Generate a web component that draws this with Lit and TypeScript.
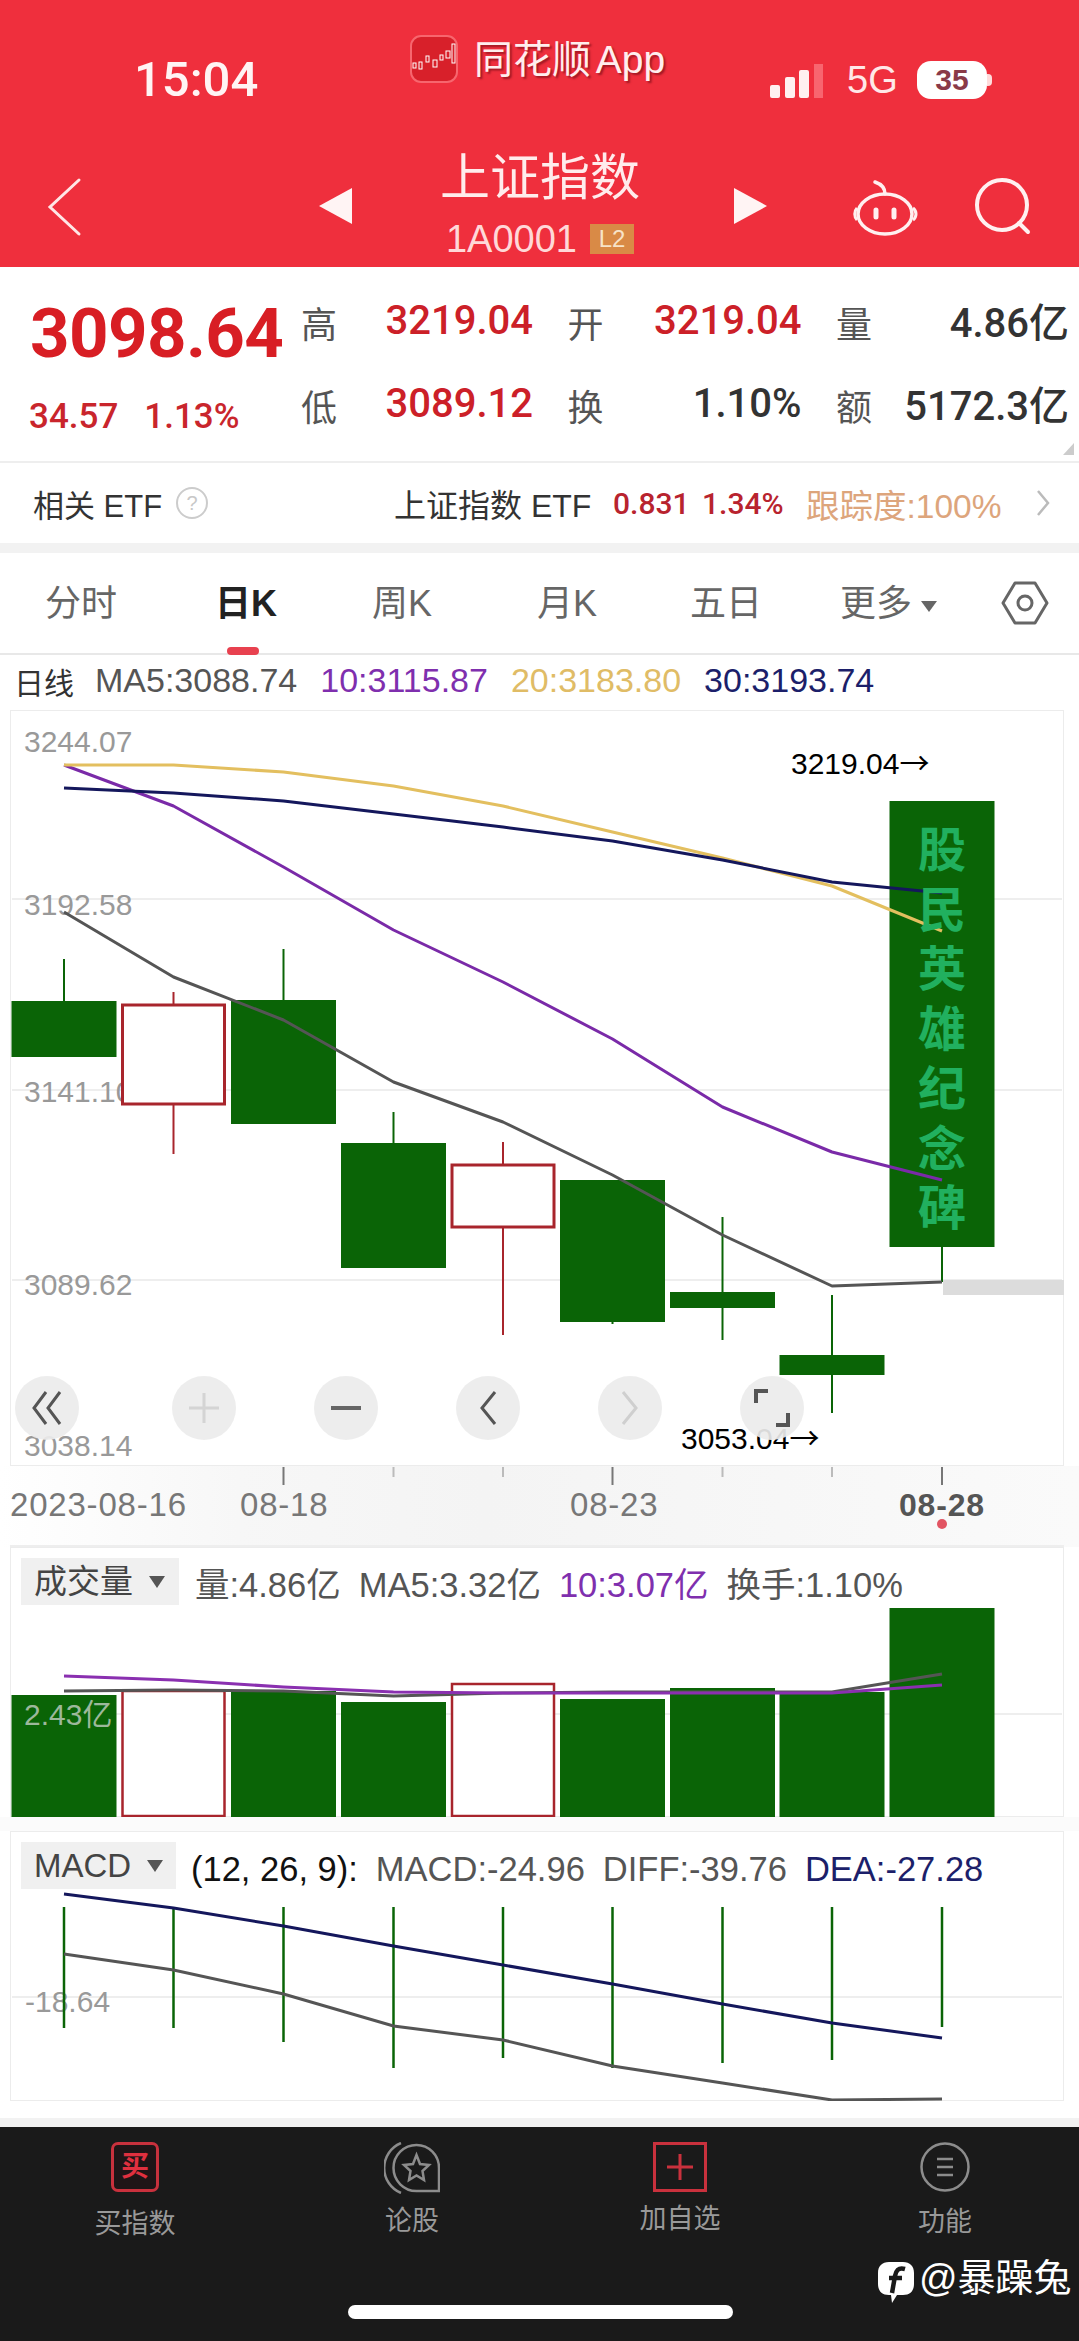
import { LitElement, css, html, svg } from "lit";
import { customElement } from "lit/decorators.js";

type Candle = {
  x: number;
  up: boolean;
  wickTop: number;
  top: number;
  bottom: number;
  wickBottom: number;
};

const X = [64, 173.5, 283.5, 393.5, 503, 612.5, 722.5, 832, 942];

const CANDLES: Candle[] = [
  { x: X[0], up: false, wickTop: 959, top: 1001, bottom: 1057, wickBottom: 1057 },
  { x: X[1], up: true, wickTop: 992, top: 1005, bottom: 1104, wickBottom: 1154 },
  { x: X[2], up: false, wickTop: 949, top: 1000, bottom: 1124, wickBottom: 1124 },
  { x: X[3], up: false, wickTop: 1112, top: 1143, bottom: 1268, wickBottom: 1268 },
  { x: X[4], up: true, wickTop: 1142, top: 1165, bottom: 1227, wickBottom: 1335 },
  { x: X[5], up: false, wickTop: 1180, top: 1180, bottom: 1322, wickBottom: 1324 },
  { x: X[6], up: false, wickTop: 1217, top: 1292, bottom: 1308, wickBottom: 1340 },
  { x: X[7], up: false, wickTop: 1295, top: 1355, bottom: 1375, wickBottom: 1413 },
  { x: X[8], up: false, wickTop: 801, top: 801, bottom: 1247, wickBottom: 1282 },
];

const MA5 = [912, 977, 1020, 1082, 1122, 1175, 1235, 1286, 1282];
const MA10 = [765, 806, 867, 930, 982, 1039, 1107, 1152, 1180];
const MA20 = [765, 765, 772, 786, 806, 832, 858, 886, 931];
const MA30 = [788, 793, 801, 814, 827, 841, 860, 882, 893];

const VOLUMES = [1695, 1691, 1691, 1702, 1684, 1699, 1688, 1692, 1608];
const VOL_A = [1676, 1680, 1687, 1692, 1693, 1693, 1693, 1693, 1685];
const VOL_B = [1691, 1690, 1691, 1696, 1693, 1692, 1692, 1692, 1674];

const MACD_BOTTOM = [2028, 2028, 2042, 2068, 2058, 2068, 2063, 2060, 2027];
const DEA = [1894, 1908, 1926, 1946, 1965, 1984, 2004, 2023, 2038];
const DIFF = [1954, 1970, 1994, 2026, 2040, 2066, 2083, 2100, 2099];

const LOGO_CANDLES = [
  [3, 28, 3, 5],
  [9, 27, 3, 7],
  [16, 21, 3, 6],
  [23, 25, 4, 7],
  [30, 20, 3, 5],
  [36, 16, 4, 7],
  [42, 9, 3, 19],
];

const TICKS = [X[2], X[3], X[4], X[5], X[6], X[7], X[8]];

const pts = (ys: number[]) => ys.map((y, i) => `${X[i]},${y}`).join(" ");

@customElement("app-root")
export class AppRoot extends LitElement {
  static styles = css`
    :host {
      display: block;
      width: 1079px;
      height: 2341px;
      overflow: hidden;
      position: relative;
      background: #fff;
      font-family: "Liberation Sans", "Noto Sans CJK SC", sans-serif;
      color: #333;
    }
    svg {
      display: block;
    }
    svg text {
      font-family: "Liberation Sans", "Noto Sans CJK SC", sans-serif;
    }

    /* header */
    .header {
      height: 267px;
      background: #ef2f3d;
      color: #fff;
      overflow: hidden;
    }
    .status {
      height: 148px;
      display: grid;
      grid-template-columns: 410px 360px 1fr;
      align-items: start;
    }
    .time {
      font-family: Roboto, sans-serif;
      font-weight: 500;
      font-size: 49px;
      line-height: 56px;
      padding: 52px 0 0 134px;
      color: #fff4f4;
    }
    .app {
      display: flex;
      align-items: center;
      gap: 16px;
      margin-top: 33px;
      font-size: 39px;
      line-height: 48px;
      word-spacing: -6px;
      color: #ffeeee;
      text-shadow: 2px 2px 2px rgba(110, 10, 20, 0.6);
    }
    .app span {
      margin-top: 3px;
    }
    .sys {
      display: flex;
      align-items: center;
      height: 38px;
      margin-top: 61px;
    }
    .fiveg {
      font-size: 38px;
      line-height: 38px;
      width: 48px;
      margin: 0 22px 0 24px;
      color: #ffe8e8;
      white-space: nowrap;
    }
    .battery {
      width: 70px;
      height: 38px;
      border-radius: 14px;
      background: #fff;
      color: #8a3a48;
      font-size: 30px;
      font-weight: 700;
      line-height: 38px;
      text-align: center;
    }
    .nub {
      width: 5px;
      height: 12px;
      border-radius: 0 4px 4px 0;
      background: #ffdcdc;
    }
    .nav {
      display: grid;
      grid-template-columns: 319px 121px 200px 127px 151px 1fr;
      align-items: start;
    }
    .back {
      margin: 29px 0 0 44px;
    }
    .tri {
      margin-top: 40px;
    }
    .tri.right {
      justify-self: end;
    }
    .robot {
      justify-self: end;
      margin-top: 30px;
      margin-right: -1px;
    }
    .search {
      margin: 28px 0 0 54px;
    }
    .title {
      text-align: center;
    }
    .name {
      font-size: 50px;
      line-height: 60px;
      color: #ffecec;
    }
    .code {
      display: flex;
      justify-content: center;
      align-items: center;
      gap: 13px;
      margin-top: 14px;
      font-size: 38px;
      line-height: 34px;
      color: #ffd8d8;
    }
    .l2 {
      width: 44px;
      height: 30px;
      background: #d98a46;
      color: #f7e3c8;
      font-size: 24px;
      line-height: 30px;
    }

    /* quote */
    .quote {
      height: 194px;
      box-sizing: border-box;
      padding: 30px 12px 0 29px;
      display: grid;
      grid-template-columns: 272px 1fr;
      position: relative;
    }
    .price {
      font-family: Roboto, sans-serif;
      font-weight: 700;
      font-size: 69px;
      line-height: 64px;
      letter-spacing: -0.6px;
      color: #d81e24;
      margin: 5px 0 0 1px;
    }
    .change {
      display: flex;
      gap: 26px;
      margin-top: 31px;
      font-family: Roboto, sans-serif;
      font-weight: 500;
      font-size: 35px;
      line-height: 40px;
      color: #c9252c;
    }
    .stats {
      display: grid;
      grid-template-columns: 230px 232px 231px;
      column-gap: 36.5px;
      row-gap: 33px;
      align-content: start;
    }
    .stat {
      display: flex;
      justify-content: space-between;
      align-items: center;
      height: 50px;
    }
    .stat label {
      font-size: 36px;
      color: #555;
    }
    .stat b {
      font-family: Roboto, "Noto Sans CJK SC", sans-serif;
      font-weight: 500;
      font-size: 40px;
      color: #333;
      white-space: nowrap;
      margin: -4px -2px 0 0;
    }
    .stat b.red {
      color: #cc2028;
    }
    .corner {
      position: absolute;
      right: 5px;
      bottom: 6px;
      width: 0;
      height: 0;
      border-left: 11px solid transparent;
      border-bottom: 12px solid #ccc;
    }

    /* etf */
    .etf {
      height: 82px;
      box-sizing: border-box;
      border-top: 2px solid #eee;
      display: flex;
      align-items: center;
      padding-left: 33px;
      font-size: 32px;
      white-space: nowrap;
    }
    .etf-label {
      width: 129px;
      font-size: 31px;
    }
    .help {
      width: 28px;
      height: 28px;
      margin-left: 14px;
      border: 2px solid #ccc;
      border-radius: 50%;
      color: #c8c8c8;
      font-size: 20px;
      line-height: 28px;
      text-align: center;
    }
    .etf-name {
      margin-left: 186px;
      width: 219px;
    }
    .etf-num {
      font-family: Roboto, sans-serif;
      font-weight: 500;
      font-size: 30px;
      color: #b8232e;
      width: 89px;
    }
    .etf-num.wide {
      width: 104px;
    }
    .track {
      width: 230px;
      font-size: 33.5px;
      color: #dda57c;
    }
    .band {
      height: 10px;
      background: #f2f2f2;
    }

    /* tabs */
    .tabs {
      height: 102px;
      box-sizing: border-box;
      border-bottom: 2px solid #e8e8e8;
      display: grid;
      grid-template-columns: 215px 157px 165px 153px 150px 161px 1fr;
      align-items: center;
      font-size: 36px;
      color: #666;
    }
    .tab {
      position: relative;
      padding-left: 45px;
      height: 100px;
      line-height: 102px;
      white-space: nowrap;
    }
    .tab + .tab {
      padding-left: 0;
    }
    .tab.active {
      color: #222;
      font-weight: 700;
    }
    .tab.active::after {
      content: "";
      position: absolute;
      left: 12px;
      bottom: -2px;
      width: 32px;
      height: 8px;
      border-radius: 4px;
      background: #e8414f;
    }
    .caret {
      display: inline-block;
      margin-left: 9px;
      vertical-align: 4px;
      border-left: 8px solid transparent;
      border-right: 8px solid transparent;
      border-top: 11px solid #666;
    }

    /* legends */
    .legend {
      height: 55px;
      box-sizing: border-box;
      padding: 0 0 4px 14px;
      display: flex;
      align-items: center;
      font-size: 34px;
      white-space: nowrap;
      color: #555;
    }
    .legend .line {
      font-size: 30px;
      color: #333;
      margin-right: 21px;
    }
    .legend span + span {
      margin-right: 23px;
    }
    .purple {
      color: #7f2fae;
    }
    .yellow {
      color: #e0bc66;
    }
    .navy {
      color: #1c1f6a;
    }

    /* charts */
    .chart {
      position: relative;
      height: 756px;
    }
    .chart text.axis {
      font-size: 30px;
      fill: #999;
    }
    .chart text.note {
      font-size: 30px;
      fill: #000;
    }
    .chart text.note tspan {
      font-family: "Noto Sans CJK SC", sans-serif;
    }
    .monument {
      position: absolute;
      left: 918px;
      top: 107px;
      width: 48px;
      font-family: "Noto Sans CJK SC", sans-serif;
      font-size: 48px;
      font-weight: 700;
      line-height: 59.7px;
      text-align: center;
      word-break: break-all;
      color: #21b05f;
    }
    .tools {
      position: absolute;
      left: 15px;
      top: 666px;
      display: flex;
      gap: 78px;
    }
    .tool {
      width: 64px;
      height: 64px;
      border-radius: 50%;
      background: rgba(236, 236, 236, 0.92);
      display: flex;
      align-items: center;
      justify-content: center;
    }
    .tool.far {
      margin-right: 15px;
    }
    .axis-row {
      height: 81px;
      background: linear-gradient(90deg, #fff 0%, #f7f7f7 22%, #f4f4f4 45%, #fafafa 100%);
    }
    .axis-row text {
      font-size: 33px;
      letter-spacing: 0.8px;
      fill: #777;
    }
    .axis-row text.now {
      fill: #555;
      font-size: 32px;
      font-weight: 700;
    }
    .panel {
      position: relative;
      height: 270px;
    }
    .panel text.axis {
      font-size: 30px;
      fill: #999;
    }
    .panel text.axis.on-bar {
      fill: #9db89b;
    }
    .panel-head {
      position: absolute;
      left: 21px;
      top: 11px;
      display: flex;
      align-items: flex-start;
      font-size: 34.5px;
      line-height: 47px;
      white-space: nowrap;
      color: #555;
    }
    .chip {
      box-sizing: border-box;
      height: 47px;
      background: #f0f0f0;
      padding-left: 13px;
      display: flex;
      align-items: center;
      font-size: 33px;
      color: #444;
      margin-right: 16px;
    }
    .chip.vol {
      width: 158px;
    }
    .chip.macd {
      width: 155px;
      margin-right: 15px;
    }
    .chip i {
      margin-left: 16px;
      border-left: 8px solid transparent;
      border-right: 8px solid transparent;
      border-top: 12px solid #555;
    }
    .panel-head span {
      margin-top: 4px;
    }
    .panel-head span + span {
      margin-left: 18px;
    }
    .panel-head .dark {
      color: #111;
    }
    .gap {
      height: 14px;
      background: #fbfbfb;
    }
    .foot-gap {
      height: 26px;
      box-sizing: border-box;
      border-bottom: 9px solid #f2f2f2;
    }

    /* bottom nav */
    .bottom {
      height: 214px;
      background: #1a1a1a;
      display: grid;
      grid-template-columns: 270px 284px 252px 273px;
      align-items: start;
      padding-top: 15px;
      box-sizing: border-box;
    }
    .item {
      display: flex;
      flex-direction: column;
      align-items: center;
      color: #999;
      font-size: 27px;
      line-height: 36px;
      gap: 12px;
    }
    .item.tight {
      gap: 9px;
    }
    .item.last {
      padding-left: 5px;
    }
    .item.first span {
      margin-top: 2px;
    }
    .buy {
      box-sizing: border-box;
      width: 48px;
      height: 50px;
      border: 3px solid #c9313d;
      border-radius: 7px;
      background: #1f1517;
      color: #e0303f;
      font-size: 28px;
      font-weight: 700;
      line-height: 44px;
      text-align: center;
    }
    .mark {
      position: absolute;
      left: 878px;
      top: 2262px;
      display: flex;
      align-items: center;
      gap: 5px;
      color: #fff;
      font-size: 38px;
      line-height: 41px;
      white-space: nowrap;
    }
    .mark span {
      margin-top: -9px;
    }
    .home {
      position: absolute;
      left: 348px;
      top: 2305px;
      width: 385px;
      height: 14px;
      border-radius: 7px;
      background: #fff;
    }
  `;

  private renderHeader() {
    return html`
      <div class="header">
        <div class="status">
          <div class="time">15:04</div>
          <div class="app">
            <svg width="48" height="48" viewBox="0 0 48 48">
              <rect x="1" y="1" width="46" height="46" rx="10" fill="#d8202a" stroke="#f7666e" stroke-width="2" />
              ${LOGO_CANDLES.map(
                ([x, y, w, h]) => svg`<rect x=${x} y=${y} width=${w} height=${h} fill="none" stroke="#fff" stroke-width="1" />`,
              )}
            </svg>
            <span>同花顺 App</span>
          </div>
          <div class="sys">
            <svg width="53" height="38" viewBox="0 0 53 38">
              <rect x="0" y="24" width="10" height="13" rx="2" fill="#fff0f0" />
              <rect x="15" y="16" width="10" height="21" rx="2" fill="#fff0f0" />
              <rect x="29" y="9" width="10" height="28" rx="2" fill="#fff0f0" />
              <rect x="44" y="3" width="9" height="34" fill="#f8656f" />
            </svg>
            <div class="fiveg">5G</div>
            <div class="battery">35</div>
            <div class="nub"></div>
          </div>
        </div>
        <div class="nav">
          <svg class="back" width="40" height="60" viewBox="0 0 40 60">
            <path d="M35 3 L6 30 L35 57" fill="none" stroke="#ffe6e6" stroke-width="3" stroke-linecap="round" />
          </svg>
          <svg class="tri" width="33" height="36" viewBox="0 0 33 36"><path d="M0 18 L33 0 V36 Z" fill="#fff4f4" /></svg>
          <div class="title">
            <div class="name">上证指数</div>
            <div class="code"><span>1A0001</span><div class="l2">L2</div></div>
          </div>
          <svg class="tri right" width="33" height="36" viewBox="0 0 33 36"><path d="M33 18 L0 0 V36 Z" fill="#fff4f4" /></svg>
          <svg class="robot" width="66" height="60" viewBox="0 0 66 60" fill="none" stroke="#fff0f0" stroke-width="3.5">
            <ellipse cx="32" cy="36" rx="27" ry="20" />
            <path d="M32 16 C32 9 28 6 22 4" stroke-linecap="round" />
            <path d="M4 30 C1 33 1 39 4 42 M60 30 C64 33 64 39 60 42" stroke-width="3" />
            <path d="M23 32 V39 M41 32 V39" stroke-width="5" stroke-linecap="round" />
          </svg>
          <svg class="search" width="60" height="60" viewBox="0 0 60 60" fill="none" stroke="#fff0f0" stroke-width="4">
            <circle cx="30" cy="29" r="25" />
            <path d="M47 47 L56 56" stroke-linecap="round" />
          </svg>
        </div>
      </div>
    `;
  }

  private renderQuote() {
    return html`
      <div class="quote">
        <div>
          <div class="price">3098.64</div>
          <div class="change"><span>34.57</span><span>1.13%</span></div>
        </div>
        <div class="stats">
          <div class="stat"><label>高</label><b class="red">3219.04</b></div>
          <div class="stat"><label>开</label><b class="red">3219.04</b></div>
          <div class="stat"><label>量</label><b>4.86亿</b></div>
          <div class="stat"><label>低</label><b class="red">3089.12</b></div>
          <div class="stat"><label>换</label><b>1.10%</b></div>
          <div class="stat"><label>额</label><b>5172.3亿</b></div>
        </div>
        <div class="corner"></div>
      </div>
      <div class="etf">
        <span class="etf-label">相关 ETF</span>
        <div class="help">?</div>
        <span class="etf-name">上证指数 ETF</span>
        <span class="etf-num">0.831</span>
        <span class="etf-num wide">1.34%</span>
        <span class="track">跟踪度:100%</span>
        <svg width="14" height="28" viewBox="0 0 14 28">
          <path d="M2 2 L12 14 L2 26" fill="none" stroke="#bbb" stroke-width="2.5" />
        </svg>
      </div>
      <div class="band"></div>
    `;
  }

  private renderTabs() {
    return html`
      <div class="tabs">
        <div class="tab">分时</div>
        <div class="tab active">日K</div>
        <div class="tab">周K</div>
        <div class="tab">月K</div>
        <div class="tab">五日</div>
        <div class="tab">更多<span class="caret"></span></div>
        <svg width="48" height="44" viewBox="0 0 48 44" fill="none" stroke="#666" stroke-width="3">
          <path d="M14 2 H34 L46 22 L34 42 H14 L2 22 Z" stroke-linejoin="round" />
          <circle cx="24" cy="22" r="7" />
        </svg>
      </div>
      <div class="legend">
        <span class="line">日线</span>
        <span>MA5:3088.74</span>
        <span class="purple">10:3115.87</span>
        <span class="yellow">20:3183.80</span>
        <span class="navy">30:3193.74</span>
      </div>
    `;
  }

  private renderCandle(c: Candle) {
    const stroke = c.up ? "#a8252c" : "#0a6406";
    const wick = svg`<line x1=${c.x} x2=${c.x} y1=${c.wickTop} y2=${c.wickBottom} stroke=${stroke} stroke-width="2" />`;
    const body = c.up
      ? svg`<rect x=${c.x - 51} y=${c.top} width="102" height=${c.bottom - c.top} fill="#fff" stroke=${stroke} stroke-width="3" />`
      : svg`<rect x=${c.x - 52.5} y=${c.top} width="105" height=${c.bottom - c.top} fill=${stroke} />`;
    return svg`${wick}${body}`;
  }

  private renderChart() {
    const labels: [string, number][] = [
      ["3244.07", 752],
      ["3192.58", 915],
      ["3141.10", 1102],
      ["3089.62", 1295],
      ["3038.14", 1456],
    ];
    return html`
      <div class="chart">
        <svg width="1079" height="756" viewBox="0 710 1079 756">
          <rect x="10.5" y="710.5" width="1053" height="755" fill="#fff" stroke="#ececec" />
          <g stroke="#eee" stroke-width="2">
            <line x1="12" x2="1062" y1="899" y2="899" />
            <line x1="12" x2="1062" y1="1090" y2="1090" />
            <line x1="12" x2="1062" y1="1280" y2="1280" />
          </g>
          ${labels.map(([t, y]) => svg`<text class="axis" x="24" y=${y}>${t}</text>`)}
          ${CANDLES.map((c) => this.renderCandle(c))}
          <rect x="943" y="1280" width="121" height="15" fill="#dcdcdc" />
          <g fill="none" stroke-width="3" stroke-linejoin="round">
            <polyline points=${pts(MA5)} stroke="#555" />
            <polyline points=${pts(MA10)} stroke="#7a2aa8" />
            <polyline points=${pts(MA20)} stroke="#e3bf5f" />
            <polyline points=${pts(MA30)} stroke="#14175c" />
          </g>
          <text class="note" x="791" y="774">3219.04<tspan>→</tspan></text>
          <text class="note" x="681" y="1449">3053.04<tspan>→</tspan></text>
        </svg>
        <div class="monument">股民英雄纪念碑</div>
        <div class="tools">
          <div class="tool far">
            <svg width="36" height="40" viewBox="0 0 36 40" fill="none" stroke="#555" stroke-width="3">
              <path d="M17 4 L5 20 L17 36 M31 4 L19 20 L31 36" />
            </svg>
          </div>
          <div class="tool">
            <svg width="32" height="32" viewBox="0 0 32 32" stroke="#d4d4d4" stroke-width="3">
              <path d="M16 1 V31 M1 16 H31" />
            </svg>
          </div>
          <div class="tool">
            <svg width="30" height="6" viewBox="0 0 30 6"><rect y="1" width="30" height="4" fill="#666" /></svg>
          </div>
          <div class="tool">
            <svg width="20" height="36" viewBox="0 0 20 36" fill="none" stroke="#555" stroke-width="3">
              <path d="M17 2 L4 18 L17 34" />
            </svg>
          </div>
          <div class="tool">
            <svg width="20" height="36" viewBox="0 0 20 36" fill="none" stroke="#cfcfcf" stroke-width="3">
              <path d="M3 2 L16 18 L3 34" />
            </svg>
          </div>
          <div class="tool">
            <svg width="36" height="38" viewBox="0 0 36 38" fill="none" stroke="#555" stroke-width="4">
              <path d="M2 14 V2 H14 M34 24 V36 H22" />
            </svg>
          </div>
        </div>
      </div>
      <div class="axis-row">
        <svg width="1079" height="81" viewBox="0 1466 1079 81">
          ${TICKS.map((x, i) => {
            const major = i % 3 === 0;
            return svg`<line x1=${x} x2=${x} y1="1467" y2=${major ? 1485 : 1477} stroke=${major ? "#777" : "#bbb"} stroke-width="2" />`;
          })}
          <text x="10" y="1516">2023-08-16</text>
          <text x="240" y="1516">08-18</text>
          <text x="570" y="1516">08-23</text>
          <text class="now" x="899" y="1516">08-28</text>
          <circle cx="942" cy="1524" r="5" fill="#e25563" />
          <line x1="10" x2="1064" y1="1546" y2="1546" stroke="#eee" stroke-width="2" />
        </svg>
      </div>
    `;
  }

  private renderVolume() {
    return html`
      <div class="panel">
        <svg width="1079" height="270" viewBox="0 1547 1079 270">
          <rect x="10.5" y="1547.5" width="1053" height="269" fill="#fff" stroke="#ececec" />
          <line x1="12" x2="1062" y1="1714" y2="1714" stroke="#eee" stroke-width="2" />
          ${VOLUMES.map((top, i) =>
            CANDLES[i].up
              ? svg`<rect x=${X[i] - 51} y=${top} width="102" height=${1816 - top} fill="#fff" stroke="#a8252c" stroke-width="2.5" />`
              : svg`<rect x=${X[i] - 52.5} y=${top} width="105" height=${1817 - top} fill="#0a6406" />`,
          )}
          <text class="axis on-bar" x="24" y="1725">2.43亿</text>
          <g fill="none" stroke-width="3">
            <polyline points=${pts(VOL_B)} stroke="#555" />
            <polyline points=${pts(VOL_A)} stroke="#8a30b0" />
          </g>
        </svg>
        <div class="panel-head">
          <div class="chip vol">成交量<i></i></div>
          <span>量:4.86亿</span>
          <span>MA5:3.32亿</span>
          <span class="purple">10:3.07亿</span>
          <span>换手:1.10%</span>
        </div>
      </div>
      <div class="gap"></div>
      <div class="panel">
        <svg width="1079" height="270" viewBox="0 1831 1079 270">
          <rect x="10.5" y="1831.5" width="1053" height="269" fill="#fff" stroke="#ececec" />
          <line x1="12" x2="1062" y1="1997" y2="1997" stroke="#eee" stroke-width="2" />
          <text class="axis" x="25" y="2012">-18.64</text>
          ${MACD_BOTTOM.map(
            (y, i) => svg`<line x1=${X[i]} x2=${X[i]} y1="1907" y2=${y} stroke="#0a6406" stroke-width="2.5" />`,
          )}
          <g fill="none" stroke-width="3">
            <polyline points=${pts(DIFF)} stroke="#555" />
            <polyline points=${pts(DEA)} stroke="#14175c" />
          </g>
        </svg>
        <div class="panel-head">
          <div class="chip macd">MACD<i></i></div>
          <span class="dark">(12, 26, 9):</span>
          <span>MACD:-24.96</span>
          <span>DIFF:-39.76</span>
          <span class="navy">DEA:-27.28</span>
        </div>
      </div>
      <div class="foot-gap"></div>
    `;
  }

  private renderBottom() {
    return html`
      <div class="bottom">
        <div class="item first">
          <div class="buy">买</div>
          <span>买指数</span>
        </div>
        <div class="item tight">
          <svg width="56" height="52" viewBox="0 0 56 52" fill="none" stroke="#8c8c8c" stroke-width="2.5">
            <path d="M17 1 A27 27 0 0 0 17 51" />
            <path d="M32.5 3 A23 23 0 1 0 32.5 49 H55 V26 A22.5 23 0 0 0 32.5 3 Z" />
            <path d="M32.5 13 L36 22 L45 23 L38.5 29 L40 38 L32.5 33.5 L25 38 L26.5 29 L20 23 L29 22 Z" />
          </svg>
          <span>论股</span>
        </div>
        <div class="item tight">
          <svg width="54" height="50" viewBox="0 0 54 50" fill="none" stroke="#c9313d">
            <rect x="1.5" y="1.5" width="51" height="47" stroke-width="3" />
            <path d="M27 12 V38 M14 25 H40" stroke-width="3" />
          </svg>
          <span>加自选</span>
        </div>
        <div class="item last">
          <svg width="50" height="50" viewBox="0 0 50 50" fill="none" stroke="#8c8c8c" stroke-width="2.5">
            <circle cx="25" cy="25" r="23.5" />
            <path d="M17 17 H33 M17 25 H33 M17 33 H33" />
          </svg>
          <span>功能</span>
        </div>
      </div>
      <div class="mark">
        <svg width="36" height="41" viewBox="0 0 36 41">
          <path d="M11 0 H25 C32 0 36 4 36 11 V22 C36 29 32 33 25 33 H19 L14 41 L13 33 H11 C4 33 0 29 0 22 V11 C0 4 4 0 11 0 Z" fill="#fff" />
          <path d="M27 7 C20 5 18 9 17 14 L14 31 M11 16 H24" fill="none" stroke="#1a1a1a" stroke-width="4.5" />
        </svg>
        <span>@暴躁兔</span>
      </div>
      <div class="home"></div>
    `;
  }

  render() {
    return html`
      ${this.renderHeader()} ${this.renderQuote()} ${this.renderTabs()} ${this.renderChart()} ${this.renderVolume()}
      ${this.renderBottom()}
    `;
  }
}
